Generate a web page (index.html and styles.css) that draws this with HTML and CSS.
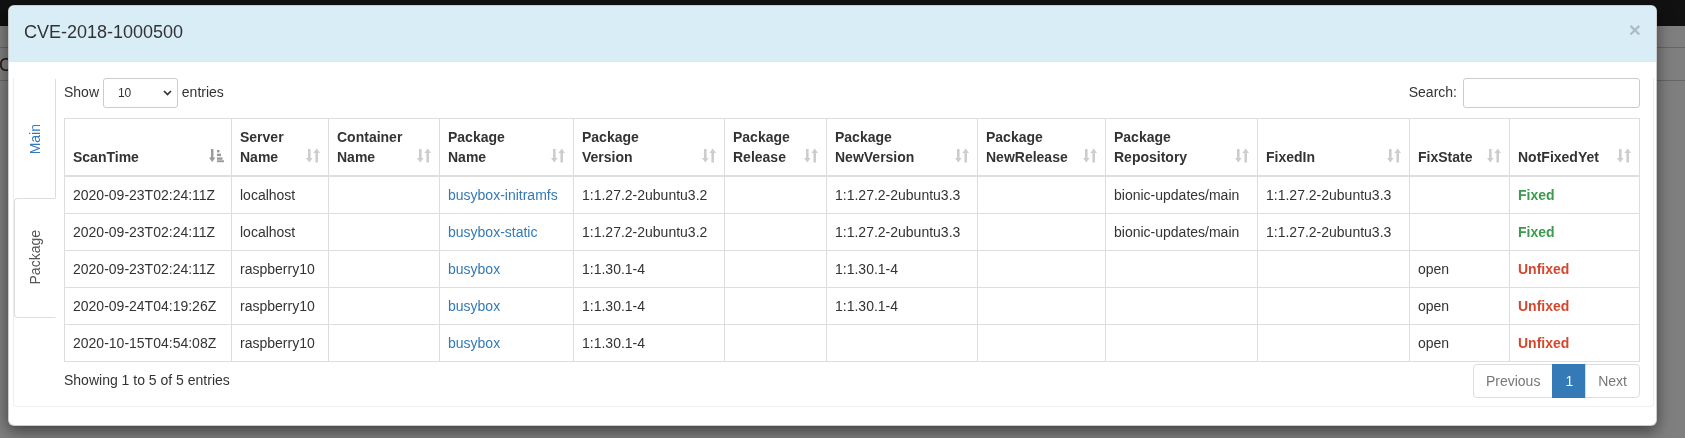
FILE: index.html
```html
<!DOCTYPE html>
<html>
<head>
<meta charset="utf-8">
<title>CVE-2018-1000500</title>
<link rel="stylesheet" href="styles.css">
</head>
<body>
<div class="page">
  <div class="navbar"></div>
  <div class="page-body">
    <div class="page-title">CVE-2018-1000500</div>
  </div>
</div>
<div class="backdrop"></div>

<div class="modal">
  <div class="modal-header">
    <span class="close">×</span>
    <h4 class="modal-title">CVE-2018-1000500</h4>
  </div>
  <div class="modal-body">
    <div class="tabs-panel">
      <ul class="nav-left">
        <li class="tab"><span class="tab-label link">Main</span></li>
        <li class="tab active"><span class="tab-label">Package</span></li>
      </ul>
      <div class="tab-content">
        <div class="dt-top">
          <div class="dt-length">Show <span class="select"><span>10</span><svg class="chev" width="9" height="6" viewBox="0 0 9 6"><polyline points="1,1 4.5,4.5 8,1" fill="none" stroke="#333" stroke-width="1.7"/></svg></span> entries</div>
          <div class="dt-filter">Search:<input class="search" type="search"></div>
        </div>
        <table class="dt">
          <colgroup>
            <col class="w-scan"><col class="w-server"><col class="w-container"><col class="w-pkg">
            <col class="w-ver"><col class="w-rel"><col class="w-newver"><col class="w-newrel">
            <col class="w-repo"><col class="w-fixedin"><col class="w-state"><col class="w-notfixed">
          </colgroup>
          <thead>
            <tr>
              <th>ScanTime<svg class="sort asc" width="15" height="15" viewBox="0 0 15 15"><rect x="2" y="1" width="2.4" height="9"/><polygon points="0,9.5 6.4,9.5 3.2,14"/><rect x="8" y="2" width="2.5" height="2.4"/><rect x="8" y="5.7" width="4" height="2.4"/><rect x="8" y="9.4" width="5.5" height="2.4"/><rect x="8" y="12.3" width="7" height="1.9"/></svg></th>
              <th>Server<br>Name<svg class="sort" width="14" height="15" viewBox="0 0 14 15"><rect x="2" y="1" width="2.6" height="9.5"/><polygon points="0,10 6.6,10 3.3,14.5"/><polygon points="7.4,5 14,5 10.7,0.5"/><rect x="9.4" y="4.5" width="2.6" height="10"/></svg></th>
              <th>Container<br>Name<svg class="sort" width="14" height="15" viewBox="0 0 14 15"><rect x="2" y="1" width="2.6" height="9.5"/><polygon points="0,10 6.6,10 3.3,14.5"/><polygon points="7.4,5 14,5 10.7,0.5"/><rect x="9.4" y="4.5" width="2.6" height="10"/></svg></th>
              <th>Package<br>Name<svg class="sort" width="14" height="15" viewBox="0 0 14 15"><rect x="2" y="1" width="2.6" height="9.5"/><polygon points="0,10 6.6,10 3.3,14.5"/><polygon points="7.4,5 14,5 10.7,0.5"/><rect x="9.4" y="4.5" width="2.6" height="10"/></svg></th>
              <th>Package<br>Version<svg class="sort" width="14" height="15" viewBox="0 0 14 15"><rect x="2" y="1" width="2.6" height="9.5"/><polygon points="0,10 6.6,10 3.3,14.5"/><polygon points="7.4,5 14,5 10.7,0.5"/><rect x="9.4" y="4.5" width="2.6" height="10"/></svg></th>
              <th>Package<br>Release<svg class="sort" width="14" height="15" viewBox="0 0 14 15"><rect x="2" y="1" width="2.6" height="9.5"/><polygon points="0,10 6.6,10 3.3,14.5"/><polygon points="7.4,5 14,5 10.7,0.5"/><rect x="9.4" y="4.5" width="2.6" height="10"/></svg></th>
              <th>Package<br>NewVersion<svg class="sort" width="14" height="15" viewBox="0 0 14 15"><rect x="2" y="1" width="2.6" height="9.5"/><polygon points="0,10 6.6,10 3.3,14.5"/><polygon points="7.4,5 14,5 10.7,0.5"/><rect x="9.4" y="4.5" width="2.6" height="10"/></svg></th>
              <th>Package<br>NewRelease<svg class="sort" width="14" height="15" viewBox="0 0 14 15"><rect x="2" y="1" width="2.6" height="9.5"/><polygon points="0,10 6.6,10 3.3,14.5"/><polygon points="7.4,5 14,5 10.7,0.5"/><rect x="9.4" y="4.5" width="2.6" height="10"/></svg></th>
              <th>Package<br>Repository<svg class="sort" width="14" height="15" viewBox="0 0 14 15"><rect x="2" y="1" width="2.6" height="9.5"/><polygon points="0,10 6.6,10 3.3,14.5"/><polygon points="7.4,5 14,5 10.7,0.5"/><rect x="9.4" y="4.5" width="2.6" height="10"/></svg></th>
              <th>FixedIn<svg class="sort" width="14" height="15" viewBox="0 0 14 15"><rect x="2" y="1" width="2.6" height="9.5"/><polygon points="0,10 6.6,10 3.3,14.5"/><polygon points="7.4,5 14,5 10.7,0.5"/><rect x="9.4" y="4.5" width="2.6" height="10"/></svg></th>
              <th>FixState<svg class="sort" width="14" height="15" viewBox="0 0 14 15"><rect x="2" y="1" width="2.6" height="9.5"/><polygon points="0,10 6.6,10 3.3,14.5"/><polygon points="7.4,5 14,5 10.7,0.5"/><rect x="9.4" y="4.5" width="2.6" height="10"/></svg></th>
              <th>NotFixedYet<svg class="sort" width="14" height="15" viewBox="0 0 14 15"><rect x="2" y="1" width="2.6" height="9.5"/><polygon points="0,10 6.6,10 3.3,14.5"/><polygon points="7.4,5 14,5 10.7,0.5"/><rect x="9.4" y="4.5" width="2.6" height="10"/></svg></th>
            </tr>
          </thead>
          <tbody>
            <tr>
              <td>2020-09-23T02:24:11Z</td><td>localhost</td><td></td><td><a class="link">busybox-initramfs</a></td>
              <td>1:1.27.2-2ubuntu3.2</td><td></td><td>1:1.27.2-2ubuntu3.3</td><td></td>
              <td>bionic-updates/main</td><td>1:1.27.2-2ubuntu3.3</td><td></td><td class="fixed">Fixed</td>
            </tr>
            <tr>
              <td>2020-09-23T02:24:11Z</td><td>localhost</td><td></td><td><a class="link">busybox-static</a></td>
              <td>1:1.27.2-2ubuntu3.2</td><td></td><td>1:1.27.2-2ubuntu3.3</td><td></td>
              <td>bionic-updates/main</td><td>1:1.27.2-2ubuntu3.3</td><td></td><td class="fixed">Fixed</td>
            </tr>
            <tr>
              <td>2020-09-23T02:24:11Z</td><td>raspberry10</td><td></td><td><a class="link">busybox</a></td>
              <td>1:1.30.1-4</td><td></td><td>1:1.30.1-4</td><td></td>
              <td></td><td></td><td>open</td><td class="unfixed">Unfixed</td>
            </tr>
            <tr>
              <td>2020-09-24T04:19:26Z</td><td>raspberry10</td><td></td><td><a class="link">busybox</a></td>
              <td>1:1.30.1-4</td><td></td><td>1:1.30.1-4</td><td></td>
              <td></td><td></td><td>open</td><td class="unfixed">Unfixed</td>
            </tr>
            <tr>
              <td>2020-10-15T04:54:08Z</td><td>raspberry10</td><td></td><td><a class="link">busybox</a></td>
              <td>1:1.30.1-4</td><td></td><td></td><td></td>
              <td></td><td></td><td>open</td><td class="unfixed">Unfixed</td>
            </tr>
          </tbody>
        </table>
        <div class="dt-bottom">
          <div class="dt-info">Showing 1 to 5 of 5 entries</div>
          <ul class="pagination">
            <li class="page-item disabled">Previous</li>
            <li class="page-item active">1</li>
            <li class="page-item disabled">Next</li>
          </ul>
        </div>
      </div>
    </div>
  </div>
</div>
</body>
</html>
```

FILE: styles.css
```css
* { box-sizing: border-box; }

html, body {
  margin: 0;
  height: 100%;
}

body {
  font-family: "Liberation Sans", Arial, Helvetica, sans-serif;
  font-size: 14px;
  line-height: 1.42857;
  color: #333;
  background: #fff;
  overflow: hidden;
}

/* page behind the dialog */
.navbar {
  height: 26px;
  background: #222;
}

.page-body {
  margin-top: 21px;
  height: 34px;
  border-top: 1px solid #ccc;
  border-bottom: 1px solid #ccc;
  padding-top: 6px;
}

.page-title {
  font-size: 18px;
  line-height: 22px;
  margin-left: -1px;
  color: #333;
}

.backdrop {
  position: fixed;
  inset: 0;
  background: rgba(0, 0, 0, 0.5);
}

/* dialog */
.modal {
  position: absolute;
  left: 8px;
  top: 5px;
  width: 1649px;
  background: #fff;
  border: 1px solid rgba(0, 0, 0, 0.2);
  border-radius: 6px;
  box-shadow: 0 5px 15px rgba(0, 0, 0, 0.5);
}

.modal-header {
  background: #d9edf7;
  padding: 14px 15px 15px;
  border-bottom: 1px solid #e5e5e5;
  border-radius: 5px 5px 0 0;
}

.modal-title {
  margin: 0;
  font-size: 18px;
  font-weight: normal;
  line-height: 1.42857;
  color: #333;
}

.close {
  float: right;
  margin-top: -1px;
  font-size: 21px;
  font-weight: bold;
  line-height: 1;
  color: #000;
  opacity: 0.2;
}

.modal-body {
  padding: 16px 2px 18px 4px;
}

.tabs-panel {
  display: flex;
  align-items: flex-start;
  width: 1641px;
  border: 1px solid #eee;
  border-top: 0;
  border-radius: 0 0 4px 4px;
  padding-bottom: 6px;
}

/* vertical tabs */
.nav-left {
  list-style: none;
  margin: 1px 0 0 0;
  padding: 0;
  width: 42px;
  flex: none;
  border-right: 1px solid #ddd;
}

.tab {
  height: 120px;
  display: flex;
  align-items: center;
  justify-content: center;
}

.tab.active {
  background: #fff;
  border: 1px solid #ddd;
  border-right-color: transparent;
  border-radius: 4px 0 0 4px;
  margin-right: -1px;
  margin-top: -1px;
}

.tab-label {
  writing-mode: vertical-rl;
  transform: rotate(180deg);
  color: #555;
  line-height: 20px;
}

.link {
  color: #337ab7;
  text-decoration: none;
}

.tab-content {
  flex: 1;
  padding: 0 14px 0 8px;
}

/* table controls */
.dt-top {
  display: flex;
  justify-content: space-between;
  align-items: center;
  height: 30px;
}

.dt-length,
.dt-filter {
  display: flex;
  align-items: center;
  white-space: pre;
}

.select {
  display: inline-flex;
  align-items: center;
  justify-content: space-between;
  width: 75px;
  height: 30px;
  padding: 1px 5px 0 14px;
  border: 1px solid #ccc;
  border-radius: 3px;
  font-size: 12px;
  color: #333;
  background: #fff;
}

.chev {
  display: block;
}

.search {
  width: 177px;
  height: 30px;
  margin: 0 0 0 6px;
  padding: 5px 10px;
  border: 1px solid #ccc;
  border-radius: 3px;
  font: 12px "Liberation Sans", Arial, sans-serif;
  outline: none;
  background: #fff;
}

/* table */
.dt {
  margin-top: 10px;
  width: 1575px;
  table-layout: fixed;
  border-collapse: collapse;
  border: 1px solid #ddd;
}

.w-scan { width: 167px; }
.w-server { width: 97px; }
.w-container { width: 111px; }
.w-pkg { width: 134px; }
.w-ver { width: 151px; }
.w-rel { width: 102px; }
.w-newver { width: 151px; }
.w-newrel { width: 128px; }
.w-repo { width: 152px; }
.w-fixedin { width: 152px; }
.w-state { width: 100px; }
.w-notfixed { width: 130px; }

.dt th,
.dt td {
  border: 1px solid #ddd;
  padding: 8px;
  line-height: 20px;
  text-align: left;
  vertical-align: top;
}

.dt th {
  position: relative;
  vertical-align: bottom;
  border-bottom: 2px solid #ddd;
  padding-right: 30px;
  font-weight: bold;
}

.dt td {
  white-space: nowrap;
  overflow: hidden;
}

.sort {
  position: absolute;
  right: 8px;
  bottom: 12px;
  fill: #cdcdcd;
}

.sort.asc {
  fill: #9a9a9a;
  right: 7px;
}

.fixed {
  color: #3c9b4c;
  font-weight: bold;
}

.unfixed {
  color: #d5472c;
  font-weight: bold;
}

/* footer */
.dt-bottom {
  display: flex;
  justify-content: space-between;
  align-items: flex-start;
}

.dt-info {
  padding-top: 9px;
}

.pagination {
  display: flex;
  list-style: none;
  margin: 2px 0;
  padding: 0;
}

.page-item {
  padding: 6px 12px;
  line-height: 20px;
  border: 1px solid #ddd;
  margin-left: -1px;
  color: #777;
  background: #fff;
}

.page-item:first-child {
  margin-left: 0;
  border-radius: 4px 0 0 4px;
}

.page-item:last-child {
  border-radius: 0 4px 4px 0;
}

.page-item.active {
  background: #337ab7;
  border-color: #337ab7;
  color: #fff;
}
```
